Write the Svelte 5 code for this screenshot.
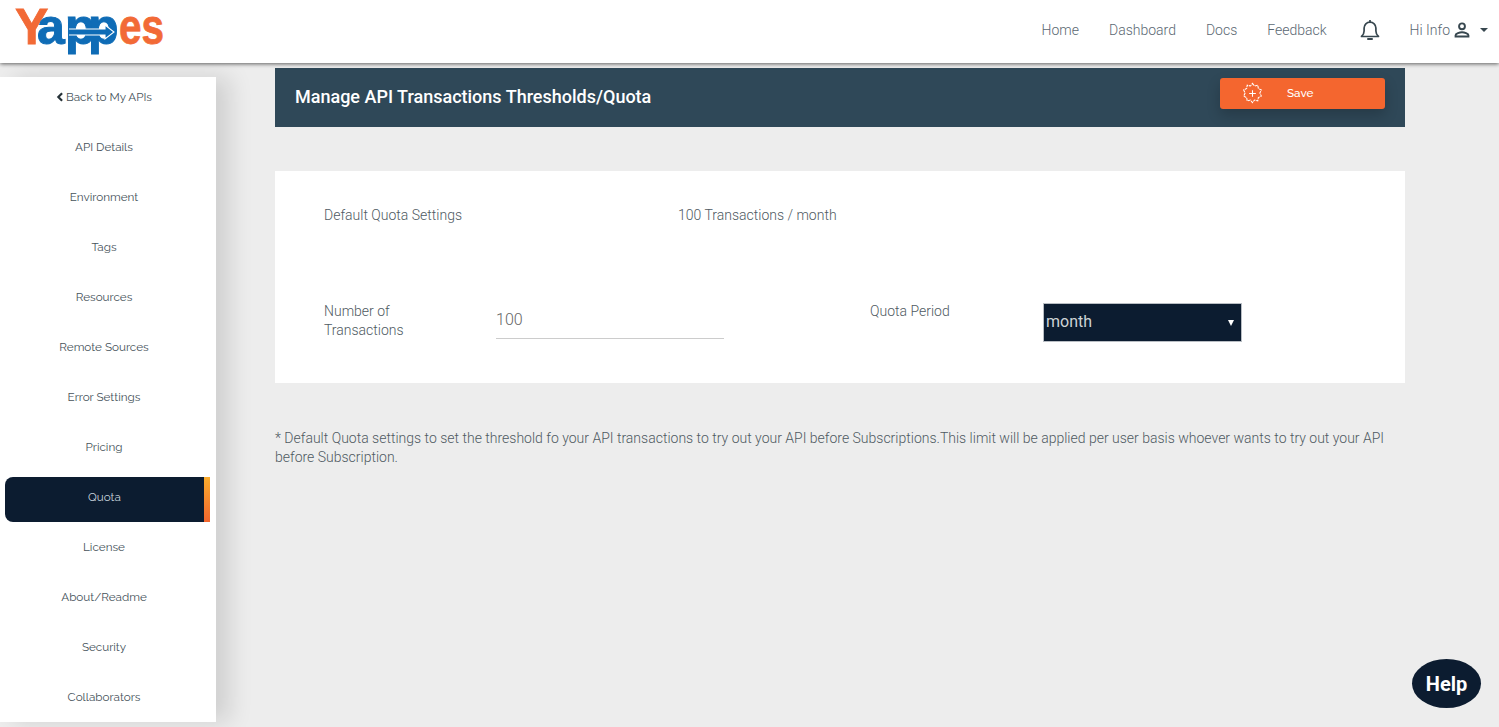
<script>
  const links = ['Home', 'Dashboard', 'Docs', 'Feedback'];
  const menu = ['API Details', 'Environment', 'Tags', 'Resources', 'Remote Sources', 'Error Settings', 'Pricing', 'Quota', 'License', 'About/Readme', 'Security', 'Collaborators'];
  const active = 'Quota';
</script>

<div class="page">
  <header class="top">
    <svg class="logo" viewBox="0 0 150 62" width="150" height="62" aria-label="Yappes">
      <text class="lg" x="0 22 50 73" y="43"><tspan class="or">Y</tspan><tspan class="bl">app</tspan></text>
      <path d="M54 28H90V24L99 31 90 38V34H54" fill="#0f6cb6" stroke="#fff" stroke-width="1.100"/>
      <text class="lg or" x="104" y="43" textLength="45" lengthAdjust="spacingAndGlyphs">es</text>
    </svg>
    <nav class="nav">
      {#each links as l}<span class="link">{l}</span>{/each}
      <svg class="bell" viewBox="0 0 24 24" width="24" height="24" fill="none" stroke="#37474f" stroke-width="1.700" stroke-linejoin="round">
        <path d="M3.500 18.500c1.600-1.400 2.600-2.600 2.600-5.500V10a5.900 5.900 0 0 1 11.800 0v3c0 2.900 1 4.100 2.600 5.500z"/>
        <path d="M10 21h4" stroke-width="2" stroke-linecap="round"/>
        <path d="M12 2v2"/>
      </svg>
      <span class="user">
        <span class="hi">Hi Info</span>
        <svg viewBox="0 0 24 24" width="22" height="22" fill="none" stroke="#37474f" stroke-width="2.100">
          <circle cx="12" cy="8" r="3.200"/>
          <path d="M5 19v-1.300c0-2 4.500-3.300 7-3.300s7 1.300 7 3.300V19z"/>
        </svg>
        <i class="caret"></i>
      </span>
    </nav>
  </header>

  <div class="body">
    <aside class="side">
      <a class="back"><svg viewBox="0 0 8 12" width="8" height="10"><path d="M6.500 1.500L2 6l4.500 4.500" fill="none" stroke="#263238" stroke-width="2.600"/></svg>Back to My APIs</a>
      {#each menu as m}
        <a class="item" class:on={m === active}>{m}</a>
      {/each}
    </aside>

    <main class="main">
      <div class="bar">
        <h1>Manage API Transactions Thresholds/Quota</h1>
        <button class="save">
          <svg viewBox="0 0 24 24" width="23" height="23" fill="none" stroke="#fff" stroke-width="1.100">
            <path stroke-dasharray="3 .8" d="M12 1.500l2.100 2.700 3.400-.9.600 3.400 3.100 1.600-1.500 3.200 1.500 3.200-3.100 1.600-.6 3.400-3.400-.9-2.100 2.700-2.100-2.700-3.400.9-.6-3.400-3.100-1.600 1.500-3.200-1.500-3.200 3.100-1.600.6-3.400 3.400.9z"/>
            <path d="M12 8.500v7M8.500 12h7"/>
          </svg>
          <span>Save</span>
        </button>
      </div>

      <section class="card">
        <div class="row one">
          <span class="lab">Default Quota Settings</span>
          <span class="val">100 Transactions / month</span>
        </div>
        <div class="row two">
          <label class="lab num" for="tx">Number of<br />Transactions</label>
          <input id="tx" class="inp" value="100" />
          <label class="lab per" for="pd">Quota Period</label>
          <div id="pd" class="sel"><span>month</span><i></i></div>
        </div>
      </section>

      <p class="note">* Default Quota settings to set the threshold fo your API transactions to try out your API before Subscriptions.This limit will be applied per user basis whoever wants to try out your API before Subscription.</p>
    </main>
  </div>

  <button class="help">Help</button>
</div>

<style>
  :global(body) { background: #ededed; }
  .page {
    height: 727px; overflow: hidden; position: relative;
    background: #ededed; font-family: Roboto, sans-serif; color: #6b7680;
  }
  .top {
    height: 63px; background: #fff; display: flex; align-items: center; justify-content: space-between;
    padding: 0 11px 0 15px; box-shadow: 0 1px 4px #0009; position: relative; z-index: 2;
  }
  .logo { display: block; overflow: visible; }
  .lg { font-family: "Liberation Sans", sans-serif; font-weight: 700; font-size: 50px; }
  .or { fill: #f26a36; stroke: #f26a36; stroke-width: .8px; }
  .bl { fill: #0f6cb6; stroke: #0f6cb6; stroke-width: 1px; }
  .nav { display: flex; align-items: center; padding-bottom: 4px; font-size: 14px; font-weight: 300; color: #5b6872; }
  .link { margin-right: 30px; }
  .bell { margin-right: 28px; margin-left: 1px; }
  .user { display: flex; align-items: center; }
  .hi { margin-right: 1px; }
  .caret {
    margin-left: 7px; margin-top: 1px; width: 0; height: 0;
    border: 4px solid transparent; border-top-color: #37474f; border-bottom: 0;
  }
  .body { display: flex; align-items: flex-start; }
  .side {
    width: 216px; height: 645px; margin-top: 14px; background: #fff; flex: none;
    box-shadow: 14px 0 22px #0000001f; display: flex; flex-direction: column;
    font-family: Raleway, Lato, sans-serif; font-size: 11.700px; color: #46525a;
  }
  .item, .back {
    height: 45px; margin: 0 6px 5px 5px; flex: none; display: flex; align-items: center; justify-content: center;
    padding: 0 7px 5px 0; box-sizing: border-box;
  }
  .back { height: 40px; gap: 2px; margin-bottom: 10px; padding-bottom: 0; }
  .item.on {
    background: #0c1c30; color: #c9d3dc; border-radius: 8px 0 0 8px;
    border-right: 6px solid; border-image: linear-gradient(#fbae2d, #f2642e) 1;
    padding-right: 0;
  }
  .main { width: 1130px; margin-left: 59px; padding-top: 5px; flex: none; }
  .bar {
    height: 59px; background: #2f4858; display: flex; align-items: center; justify-content: space-between;
    padding: 0 20px;
  }
  .bar h1 { margin: -2px 0 0; font-size: 18px; font-weight: 500; color: #fff; }
  .save {
    width: 165px; height: 31px; margin-top: -8px; background: #f4662f; border: 0; border-radius: 3px;
    display: flex; align-items: center; padding: 0 0 1px 21px; color: #fff;
    font-family: Raleway, Lato, sans-serif; font-size: 11.700px; font-weight: 500;
    box-shadow: 0 6px 14px #0003;
  }
  .save span { margin-left: 23px; }
  .card { margin-top: 44px; height: 212px; background: #fff; padding: 0 49px; box-sizing: border-box; }
  .row { display: flex; font-size: 14px; font-weight: 300; color: #4f5a62; }
  .row.one { padding-top: 36px; height: 132px; box-sizing: border-box; line-height: 17px; }
  .one .lab { width: 354px; }
  .lab { display: block; }
  .two { line-height: 19px; }
  .num { width: 172px; margin-top: -1px; }
  .inp {
    width: 228px; height: 38px; margin-top: -2px; box-sizing: border-box; border: 0; border-bottom: 1px solid #ccc;
    font: 300 16px Roboto, sans-serif; color: #666; padding: 0; outline: none;
  }
  .per { margin-left: 146px; width: 173px; margin-top: -1px; }
  .sel {
    width: 199px; height: 39px; box-sizing: border-box; background: #0c1c30; border: 1px solid #b9bec4;
    color: #cfd3d6; font-size: 16px; font-weight: 400; display: flex; align-items: center; justify-content: space-between; padding: 0 7px 2px 2px;
  }
  .sel i { width: 0; height: 0; border: 3.500px solid transparent; border-top: 6px solid #fff; border-bottom: 0; margin-top: 2px; }
  .note { margin: 46px 0 0; font-size: 14px; font-weight: 300; line-height: 19px; color: #4f5a62; }
  .help {
    position: absolute; left: 1412px; top: 659px; width: 69px; height: 49px; border-radius: 50%;
    background: #0c1c30; border: 0; padding: 0; color: #fff; font: 700 20px Roboto, sans-serif;
  }
</style>
